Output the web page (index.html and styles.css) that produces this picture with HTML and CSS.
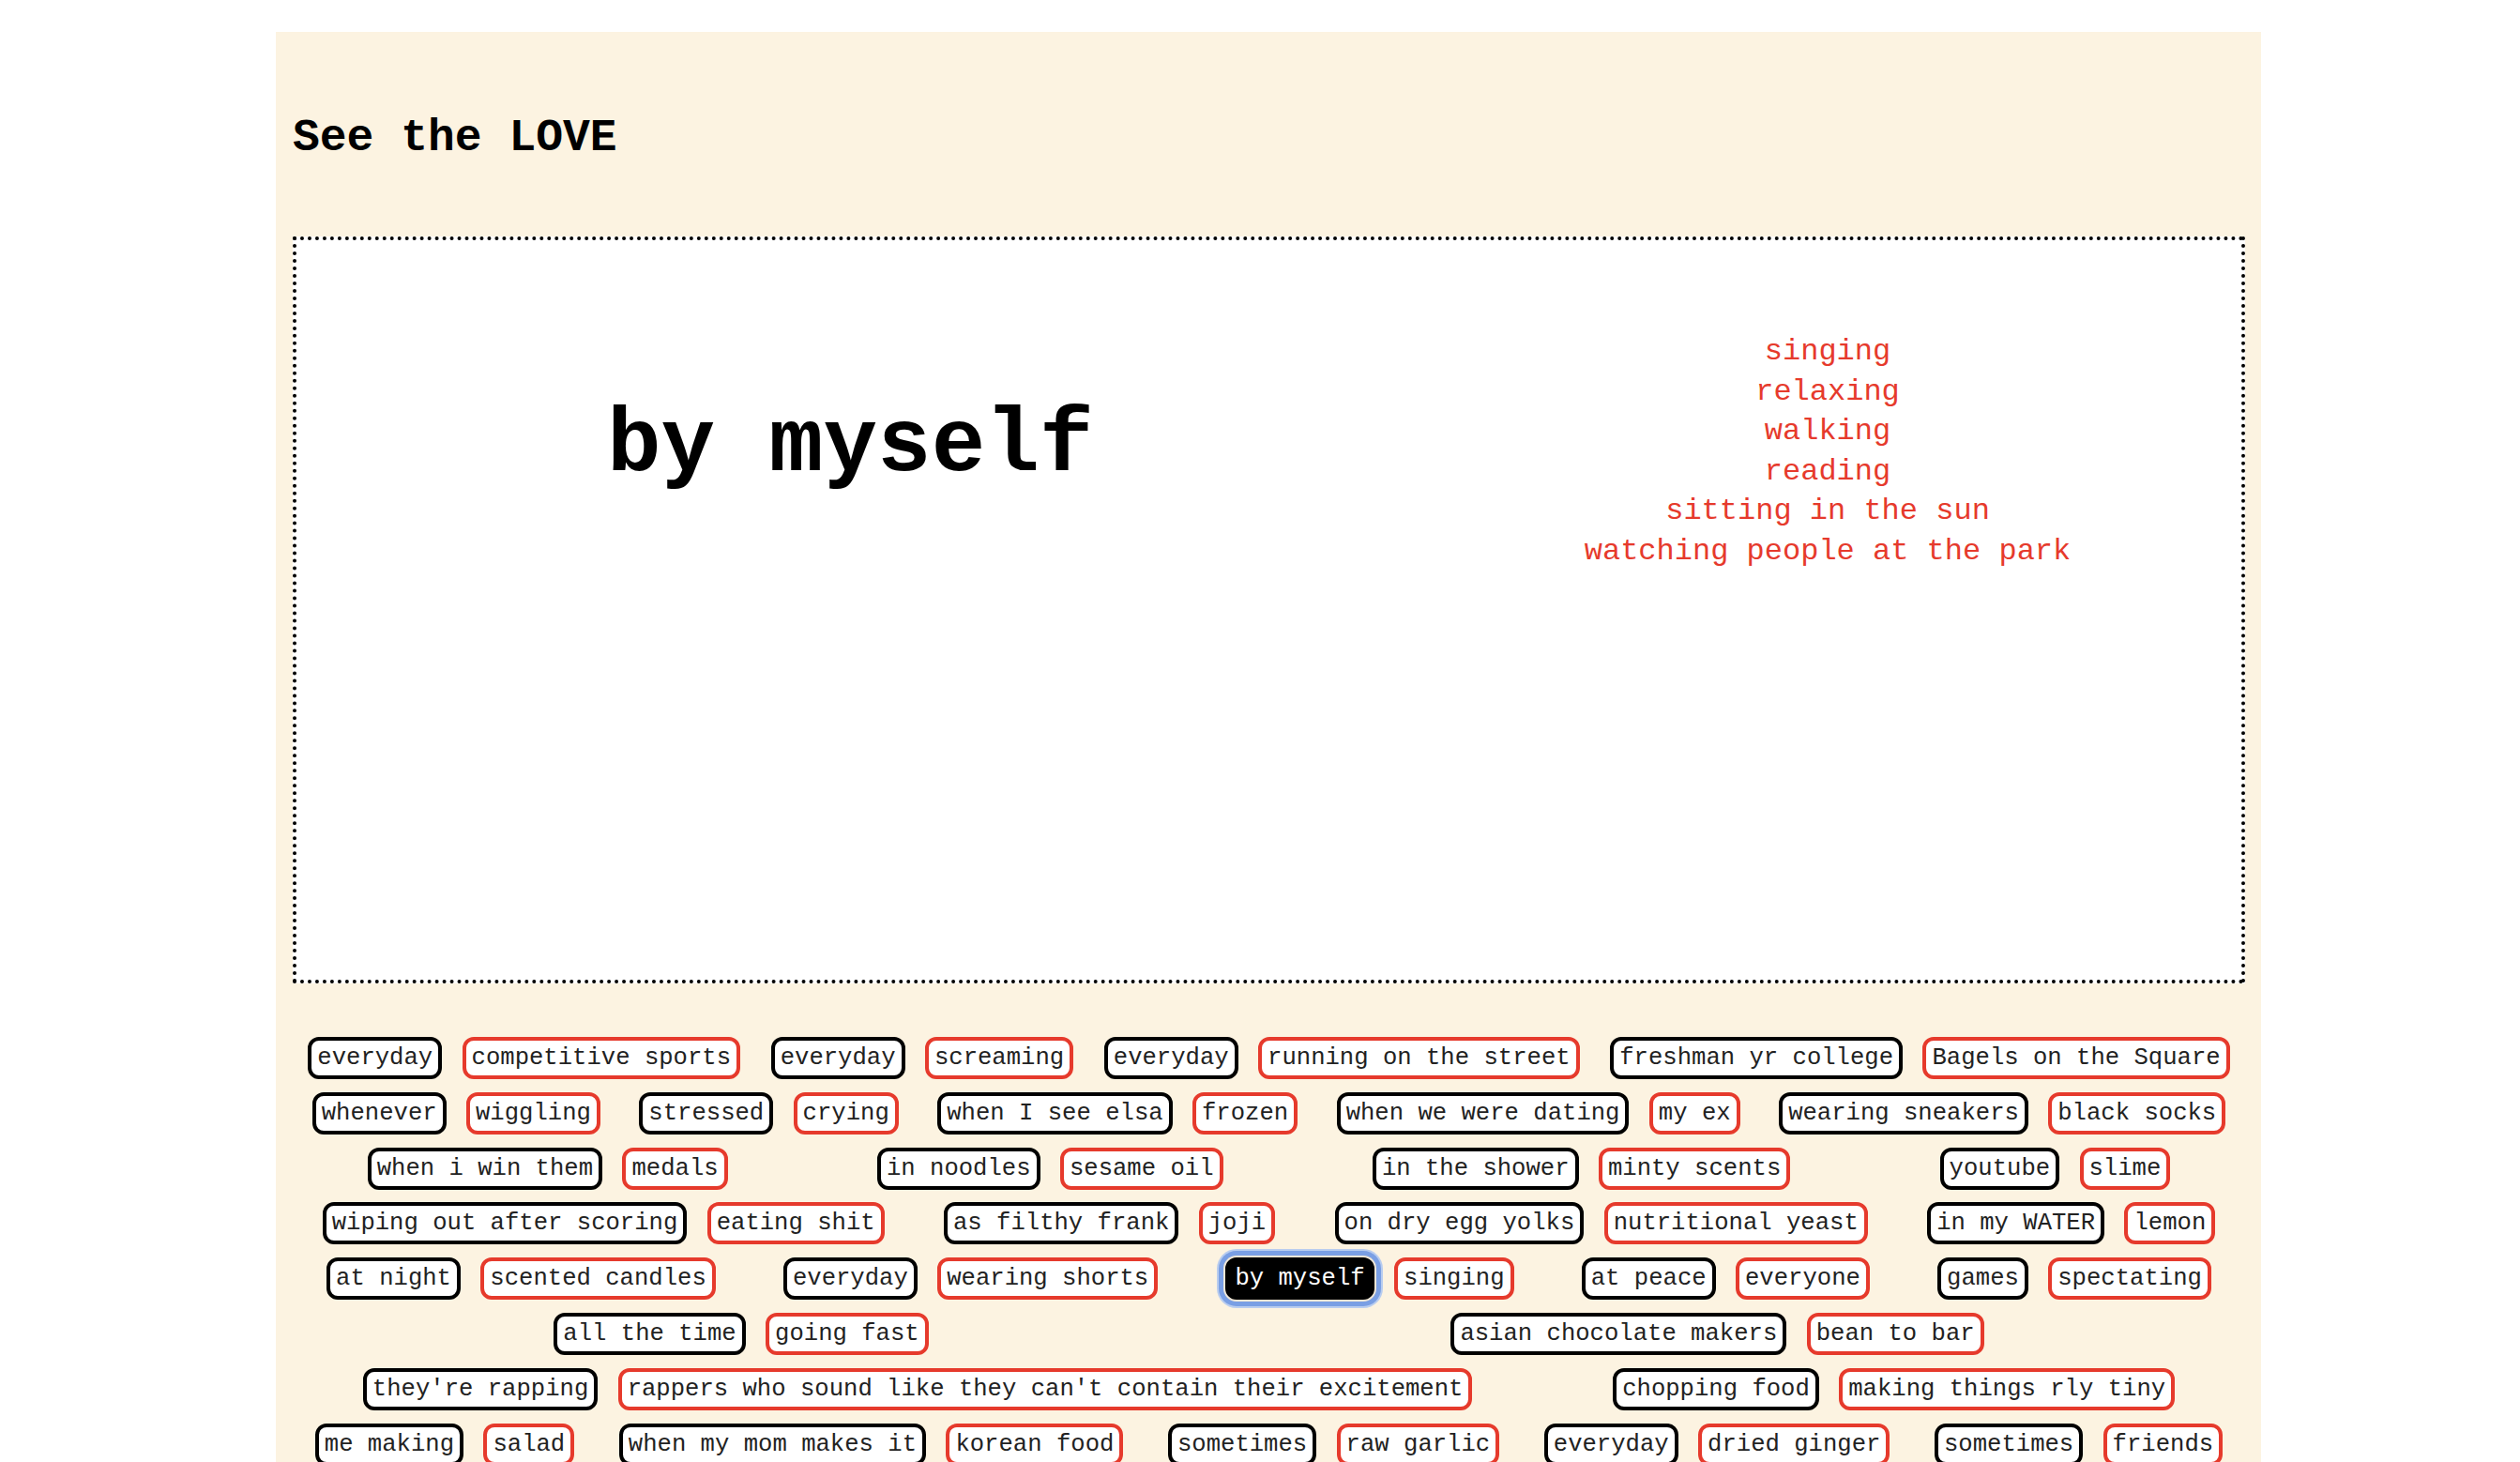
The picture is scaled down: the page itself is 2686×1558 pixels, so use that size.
FILE: index.html
```html
<!DOCTYPE html>
<html lang="en">
<head>
<meta charset="utf-8">
<title>See the LOVE</title>
<link rel="stylesheet" href="styles.css">
</head>
<body>
<main class="panel">
  <h2 class="title">See the LOVE</h2>

  <section class="stage">
    <div class="big">by myself</div>
    <ul class="loves">
      <li>singing</li>
      <li>relaxing</li>
      <li>walking</li>
      <li>reading</li>
      <li>sitting in the sun</li>
      <li>watching people at the park</li>
    </ul>
  </section>

  <section class="tags">
    <div class="row">
      <span class="pair"><span class="tag dark">everyday</span><span class="tag red">competitive sports</span></span>
      <span class="pair"><span class="tag dark">everyday</span><span class="tag red">screaming</span></span>
      <span class="pair"><span class="tag dark">everyday</span><span class="tag red">running on the street</span></span>
      <span class="pair"><span class="tag dark">freshman yr college</span><span class="tag red">Bagels on the Square</span></span>
    </div>
    <div class="row">
      <span class="pair"><span class="tag dark">whenever</span><span class="tag red">wiggling</span></span>
      <span class="pair"><span class="tag dark">stressed</span><span class="tag red">crying</span></span>
      <span class="pair"><span class="tag dark">when I see elsa</span><span class="tag red">frozen</span></span>
      <span class="pair"><span class="tag dark">when we were dating</span><span class="tag red">my ex</span></span>
      <span class="pair"><span class="tag dark">wearing sneakers</span><span class="tag red">black socks</span></span>
    </div>
    <div class="row">
      <span class="pair"><span class="tag dark">when i win them</span><span class="tag red">medals</span></span>
      <span class="pair"><span class="tag dark">in noodles</span><span class="tag red">sesame oil</span></span>
      <span class="pair"><span class="tag dark">in the shower</span><span class="tag red">minty scents</span></span>
      <span class="pair"><span class="tag dark">youtube</span><span class="tag red">slime</span></span>
    </div>
    <div class="row">
      <span class="pair"><span class="tag dark">wiping out after scoring</span><span class="tag red">eating shit</span></span>
      <span class="pair"><span class="tag dark">as filthy frank</span><span class="tag red">joji</span></span>
      <span class="pair"><span class="tag dark">on dry egg yolks</span><span class="tag red">nutritional yeast</span></span>
      <span class="pair"><span class="tag dark">in my WATER</span><span class="tag red">lemon</span></span>
    </div>
    <div class="row">
      <span class="pair"><span class="tag dark">at night</span><span class="tag red">scented candles</span></span>
      <span class="pair"><span class="tag dark">everyday</span><span class="tag red">wearing shorts</span></span>
      <span class="pair"><span class="tag dark on">by myself</span><span class="tag red">singing</span></span>
      <span class="pair"><span class="tag dark">at peace</span><span class="tag red">everyone</span></span>
      <span class="pair"><span class="tag dark">games</span><span class="tag red">spectating</span></span>
    </div>
    <div class="row">
      <span class="pair"><span class="tag dark">all the time</span><span class="tag red">going fast</span></span>
      <span class="pair"><span class="tag dark">asian chocolate makers</span><span class="tag red">bean to bar</span></span>
    </div>
    <div class="row">
      <span class="pair"><span class="tag dark">they're rapping</span><span class="tag red">rappers who sound like they can't contain their excitement</span></span>
      <span class="pair"><span class="tag dark">chopping food</span><span class="tag red">making things rly tiny</span></span>
    </div>
    <div class="row">
      <span class="pair"><span class="tag dark">me making</span><span class="tag red">salad</span></span>
      <span class="pair"><span class="tag dark">when my mom makes it</span><span class="tag red">korean food</span></span>
      <span class="pair"><span class="tag dark">sometimes</span><span class="tag red">raw garlic</span></span>
      <span class="pair"><span class="tag dark">everyday</span><span class="tag red">dried ginger</span></span>
      <span class="pair"><span class="tag dark">sometimes</span><span class="tag red">friends</span></span>
    </div>
  </section>
</main>
</body>
</html>
```

FILE: styles.css
```css
html, body {
  margin: 0;
  padding: 0;
  background: #ffffff;
}

body {
  font-family: "Liberation Mono", "Courier New", monospace;
  color: #000;
}

.panel {
  box-sizing: border-box;
  margin: 34px 0 0 294px;
  width: 2116px;
  padding: 86px 17px 60px 18px;
  background: #fcf3e1;
}

.title {
  margin: 0 0 78px 0;
  font-size: 48px;
  font-weight: bold;
  line-height: normal;
}

.stage {
  box-sizing: border-box;
  height: 796px;
  border: 4px dotted #000;
  background: #ffffff;
  display: flex;
  align-items: flex-start;
}

.big {
  margin: 165px 0 0 331px;
  font-size: 96px;
  font-weight: bold;
  line-height: normal;
  white-space: nowrap;
}

.loves {
  list-style: none;
  margin: 98px 91px 0 auto;
  padding: 0;
  width: 700px;
  text-align: center;
  color: #e63a2c;
  font-size: 32px;
  line-height: 42.5px;
}

.tags {
  margin-top: 57px;
  display: flex;
  flex-direction: column;
  gap: 13.8px;
}

.row {
  display: flex;
  justify-content: space-around;
}

.pair {
  display: flex;
  gap: 21.4px;
}

.tag {
  display: inline-block;
  white-space: pre;
  font-size: 25.6px;
  line-height: 29px;
  padding: 4px 6px;
  border: 4px solid #000;
  border-radius: 12px;
  background: #ffffff;
  color: #222;
}

.tag.red {
  border-color: #e63a2c;
}

.tag.on {
  background: #000;
  color: #fff;
  box-shadow: 0 0 0 2px #efe6d6, 0 0 0 7px #7a9fe4, 0 0 0 9px #b9cdef;
}
```
